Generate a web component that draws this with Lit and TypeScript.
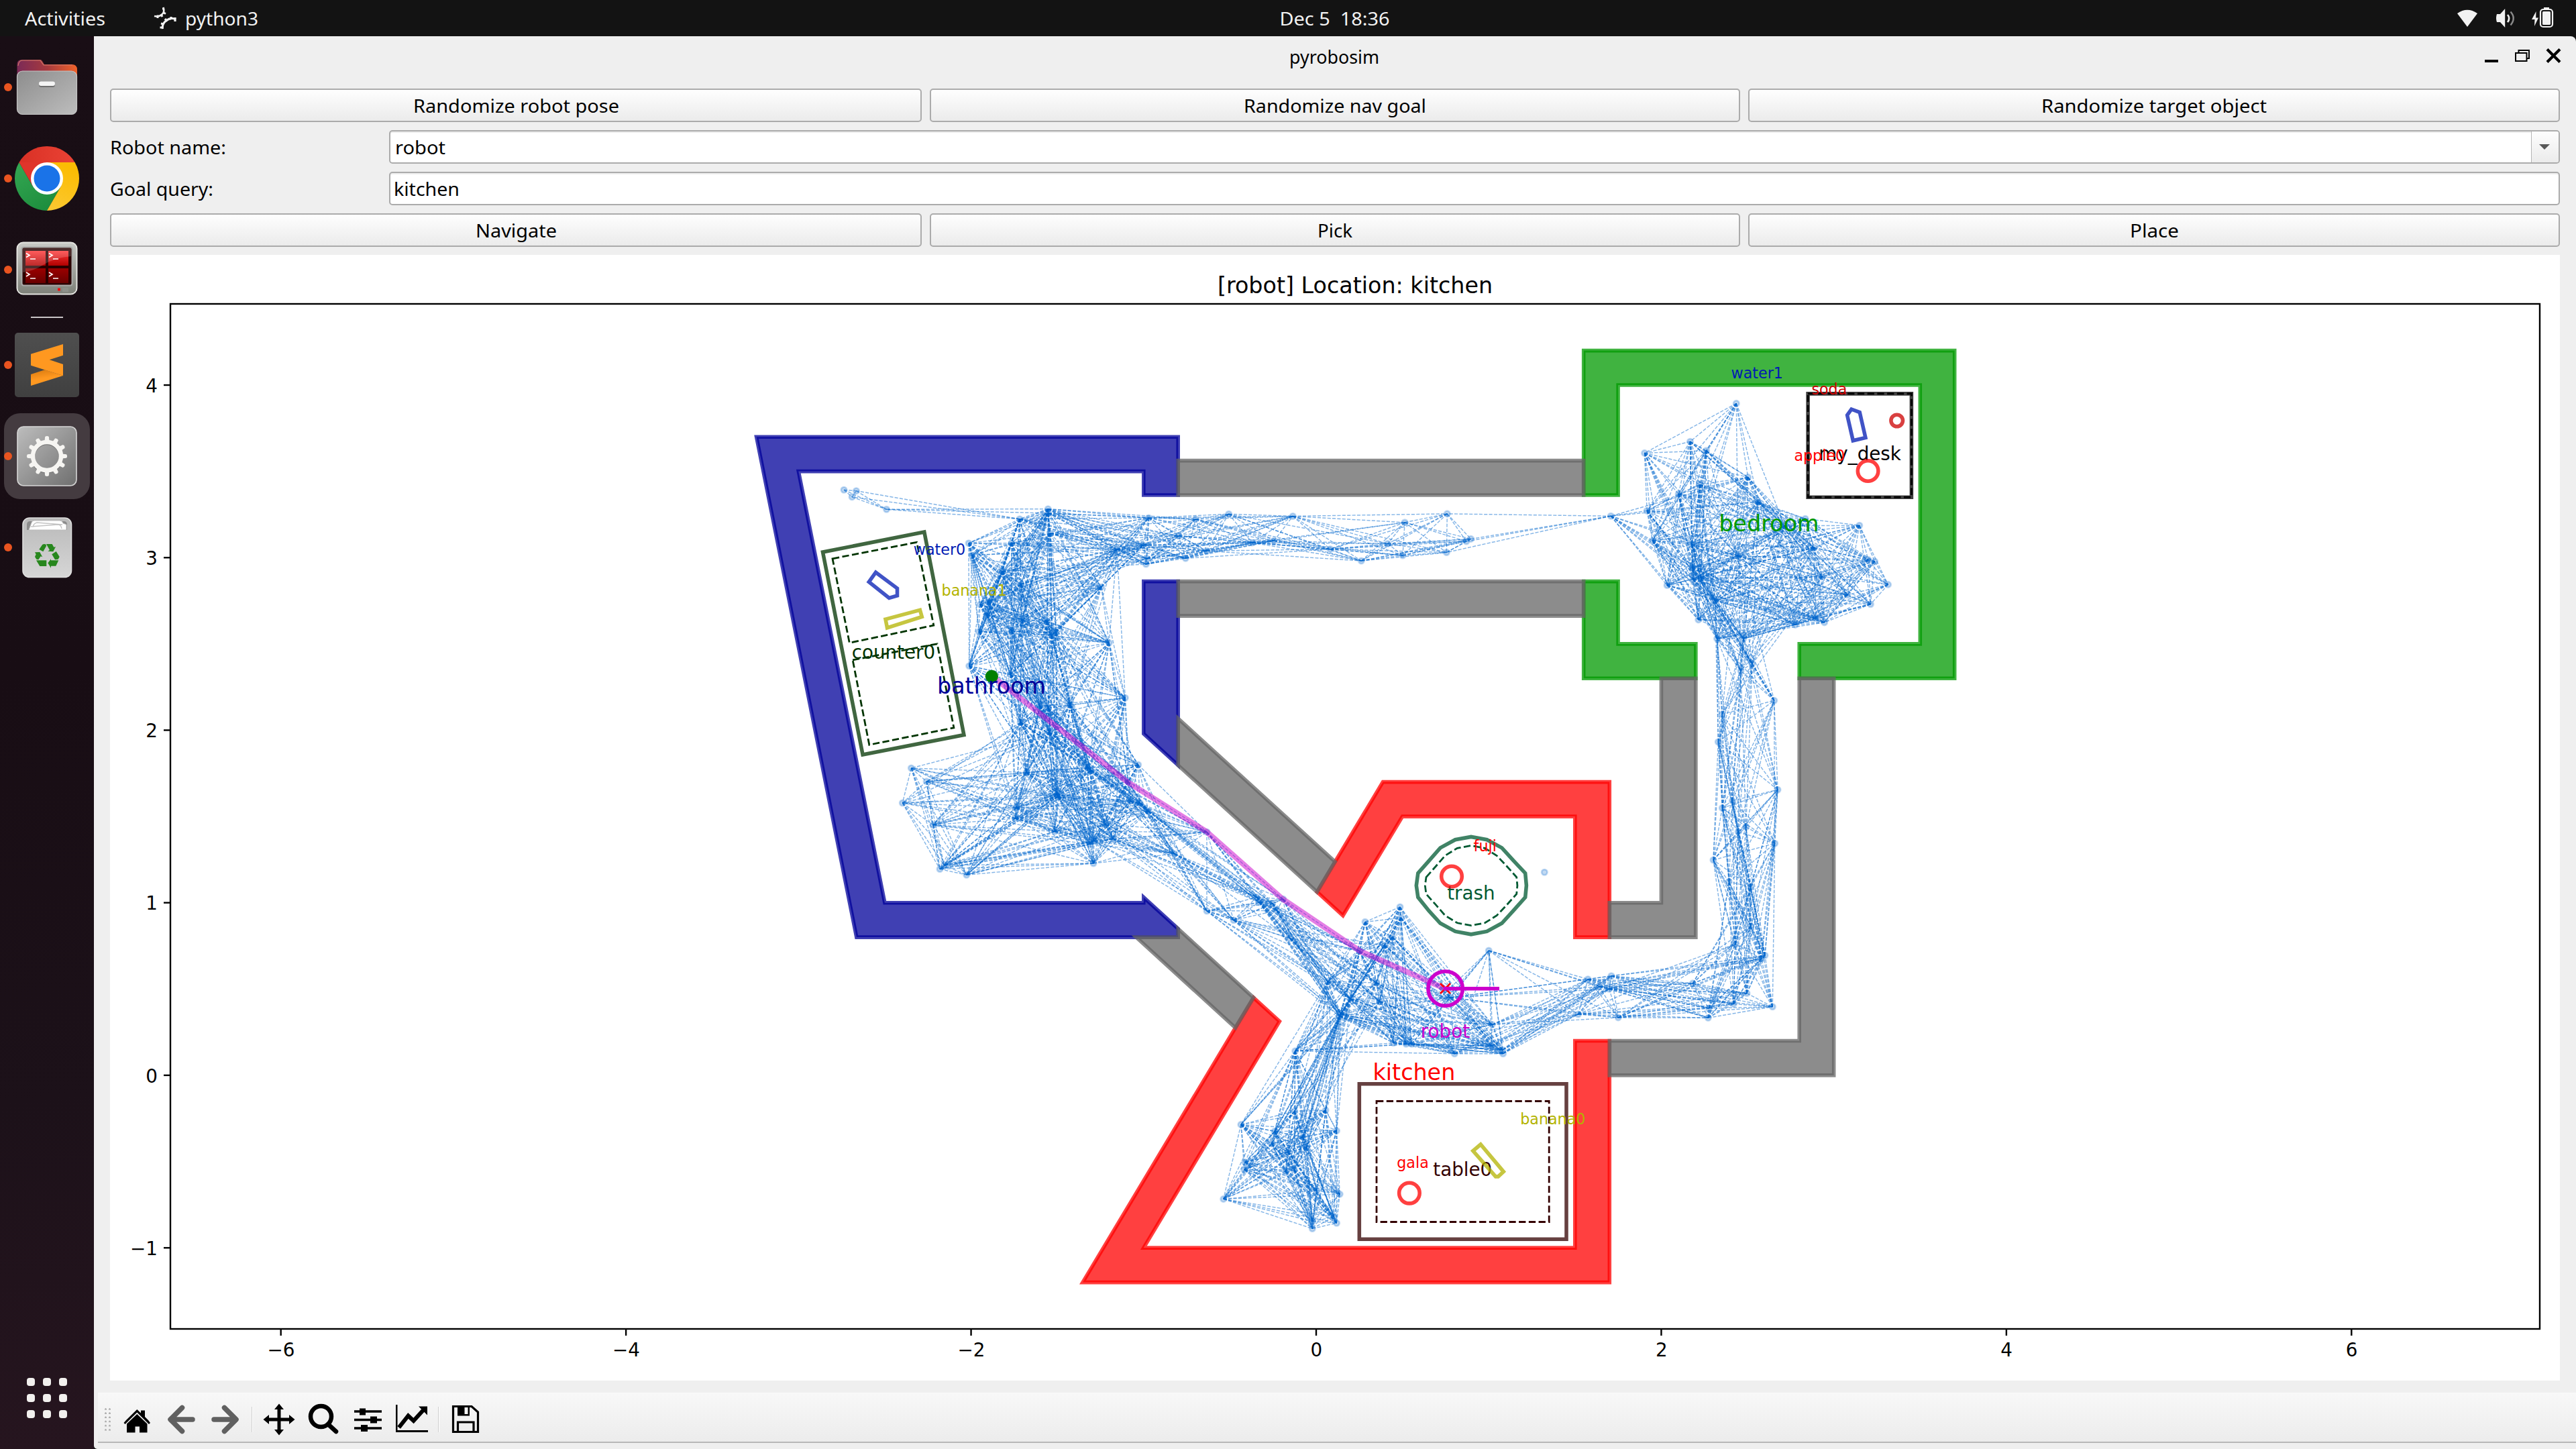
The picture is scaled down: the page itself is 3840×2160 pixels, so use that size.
import { LitElement, html, svg, css } from "lit";
import { customElement, property } from "lit/decorators.js";

type Pt = [number, number];

/* ---------- world geometry (metres) ---------- */
const PX = 257.22;
const OX = 1962;
const OY = 1602.9;
const sx = (x: number) => OX + x * PX;
const sy = (y: number) => OY - y * PX;
const poly = (pts: Pt[]) =>
  "M" + pts.map(([x, y]) => `${sx(x).toFixed(1)} ${sy(y).toFixed(1)}`).join("L") + "Z";
const polyPx = (pts: Pt[]) => "M" + pts.map((p) => p.join(" ")).join("L") + "Z";

const WALLS: { cls: string; pts: Pt[] }[] = [
  { cls: "kitchen", pts: [[0.0045, 1.0627], [0.3868, 1.7], [1.7, 1.7], [1.7, 0.8], [1.5, 0.8], [1.5, 1.5], [0.5, 1.5], [0.1551, 0.9253]] },
  { cls: "kitchen", pts: [[-0.363, 0.4503], [-1.3532, -1.2], [1.7, -1.2], [1.7, 0.2], [1.5, 0.2], [1.5, -1], [-1, -1], [-0.2123, 0.3127]] },
  { cls: "bedroom", pts: [[1.55, 3.3625], [1.55, 4.2], [3.7, 4.2], [3.7, 2.3], [2.8, 2.3], [2.8, 2.5], [3.5, 2.5], [3.5, 4], [1.75, 4], [1.75, 3.3625]] },
  { cls: "bedroom", pts: [[1.55, 2.8625], [1.75, 2.8625], [1.75, 2.5], [2.2, 2.5], [2.2, 2.3], [1.55, 2.3]] },
  { cls: "bathroom", pts: [[-0.8, 3.3625], [-0.8, 3.7], [-3.244, 3.7], [-2.664, 0.8], [-0.8, 0.8], [-0.8, 0.849], [-1, 1.0316], [-1, 1], [-2.5, 1], [-3, 3.5], [-1, 3.5], [-1, 3.3625]] },
  { cls: "bathroom", pts: [[-1, 2.8625], [-0.8, 2.8625], [-0.8, 1.797], [-1, 1.9794]] },
  { cls: "hall", pts: [[-0.8, 3.3625], [1.55, 3.3625], [1.55, 3.5625], [-0.8, 3.5625]] },
  { cls: "hall", pts: [[-0.8, 2.6625], [1.55, 2.6625], [1.55, 2.8625], [-0.8, 2.8625]] },
  { cls: "hall", pts: [[-0.8, 1.797], [-0.8, 2.0677], [0.1094, 1.2378], [0.0045, 1.0627]] },
  { cls: "hall", pts: [[-1.043, 0.8], [-0.8, 0.8], [-0.8, 0.849], [-0.363, 0.4503], [-0.468, 0.2753]] },
  { cls: "hall", pts: [[1.7, 1], [2, 1], [2, 2.3], [2.2, 2.3], [2.2, 0.8], [1.7, 0.8]] },
  { cls: "hall", pts: [[1.7, 0], [3, 0], [3, 2.3], [2.8, 2.3], [2.8, 0.2], [1.7, 0.2]] },
];

/* ---------- roadmap nodes (canvas pixels) ---------- */
const NODES: Pt[] = [
  [1562.3,758.7],[1562.7,765],[1520,773.7],[1565.7,795.3],[1444,809.7],[1508,809.7],[1448.7,827.7],[1494.3,852],
  [1521.7,871],[1472.7,897],[1461,901],[1471,916.7],[1523.3,924.3],[1560.7,926.7],[1508,940.3],[1459.3,941.7],
  [1574.3,943],[1568,947.3],[1641.7,875],[1653.3,958.3],[1444.7,992.7],[1506.3,1005.7],[1550,1052.3],[1562.7,1055.7],
  [1595.3,1050.7],[1677.3,1040.3],[1521,1076.7],[1564.3,1091.3],[1530,1151.5],[1621,1143.7],[1626,1149],[1696.7,1140],
  [1681.7,1165],[1575.2,1184.5],[1577,1188],[1514.7,1204.3],[1513.3,1220],[1685.7,1193.7],[1699.3,1197],[1712,1209.3],
  [1648.3,1229],[1665,819],[1704.3,812.7],[1712.3,772],[1710,832.7],[1708.3,841],[1767.3,832.3],[1757.3,799],
  [1782.3,774],[1798.7,821.3],[1831.7,766.3],[1866.7,809],[1899,806.3],[1572.3,1239.3],[1631,1253.3],[1625,1258.3],
  [1630,1287],[1659.3,1250.3],[1750.7,1272.7],[1799,1240.3],[1799,1358],[1839,1371.7],[1873.3,1337.3],[1876.7,1345],
  [1896.7,1346.7],[1903.3,1357.3],[1912.7,1340.3],[1923,1399],[2035,1374.3],[2087,1352],[2088.7,1368.3],[2075.7,1397],
  [2064,1409.3],[2026.7,1417.7],[2051.7,1465],[2056.7,1493],[1979.3,1463],[2013.3,1489.3],[1998.8,1511],[1996.8,1515],
  [1930.7,1566.7],[2077.3,1554.7],[2096,1556.3],[2104.3,1556.3],[2168.3,1570.7],[2224.3,1527.3],[2223.3,1559.3],
  [2240,1565],[2240.6,1570.7],[2219.3,1417],[2162,1487],[1849.9,1676.4],[1929.8,1656.5],[1976.1,1655],[1899.9,1686.5],
  [1992.5,1685.6],[1942,1694.8],[1895.7,1705],[1947.5,1710.8],[1919.7,1717.1],[1855.8,1732.6],[1854.9,1743.7],
  [1916.4,1746.6],[1929.4,1743.7],[1823.8,1787.4],[1962.7,1774.8],[1997.2,1780.1],[1956.8,1820.8],[1956.3,1831.5],
  [1988.3,1814],[1992.5,1823.2],[2352.5,1512],[2367.1,1459.7],[2384,1470.8],[2398.7,1474.2],[2402,1454.8],[2412.2,1516.9],
  [2523.3,1465.9],[2546.3,1517.3],[2547.3,1503],[2584.3,1496.6],[2604,1480.6],[2642.3,1500.8],[2631,1424.2],
  [2625.7,1429.3],[2586.7,1407.4],[2610,1380.9],[2610,1322],[2577.3,1314.4],[2554,1282],[2645.7,1257.2],[2602.7,1232.7],
  [2591,1239.9],[2567.3,1204.5],[2582.3,1193.6],[2650,1177.2],[2561.3,1106],[2567,1064.8],[2644.7,1044.2],
  [2588.3,601.4],[2519.5,658.2],[2451.5,675.4],[2543.6,671.8],[2605.7,711.4],[2533.8,722.5],[2502.1,736.4],
  [2621.1,748.2],[2455.1,761.4],[2401.3,769.3],[2691.1,773.2],[2771.8,783.2],[2660.3,783.9],[2463.4,806.1],
  [2521.5,811.4],[2704.2,816.4],[2591.1,828.6],[2784.8,834.3],[2794.7,837.1],[2522.7,846.4],[2716.4,859.6],
  [2523.9,863.2],[2535.7,861.4],[2485.1,872.5],[2814.5,871.4],[2754,886.8],[2556.7,895.4],[2788.4,900.7],
  [2706.9,921.4],[2719.6,927.9],[2676.1,931.4],[2531.8,923.9],[2559.5,952.1],[2599,952.1],[2612,989.3],[2595,1000],
  [1927.2,769.5],[2094.1,778.8],[2157.3,765.9],[2068.6,810.5],[1982.9,818.6],[2029.3,836],[2091,828],[2156.3,823.5],
  [2192.6,803.4],[2185.9,807],[1258,730.2],[1276.4,731.7],[1270.1,740.9],[1321.5,759.3],[1358.4,1145],[1381.1,1164.9],
  [1345.3,1197],[1390.8,1229.7],[1401,1295.5],[1407.3,1289.9],[1440.8,1304.2],[2302.3,1300.2],
];

/* Collision test against rooms and hallways shrunk by the robot radius. */
const E = 0.012;
function free(x: number, y: number): boolean {
  const dx = x + 1.881, dy = y - 2.3095;
  const along = 0.7386 * dx - 0.6741 * dy;
  const across = Math.abs(0.6741 * dx + 0.7386 * dy);
  const inside =
    (y > -0.9 - E && x < 1.4 + E && y < 1.4 + E && x > -0.2834 + 0.6 * y - E) ||
    (x > 1.85 - E && x < 3.4 + E && y > 2.6 - E && y < 3.9 + E) ||
    (x < -1.1 + E && y > 1.1 - E && y < 3.4 + E && x > -2.198 - 0.2 * y - E) ||
    (across < 0.25 + E && along > 0 && along < 3.32) ||
    (x > -1.9 && x < 2.6 && Math.abs(y - 3.1125) < 0.15 + E) ||
    (x > 0.9 && x < 2.7 + E && y > 0.3 - E && y < 0.7 + E) ||
    (x > 2.3 - E && x < 2.7 + E && y > 0.3 && y < 3.1);
  if (!inside) return false;
  const M = 0.1 - E;
  if (x > 2.85 - M && x < 3.45 + M && y > 3.35 - M && y < 3.95 + M) return false;
  if (x > 0.25 - M && x < 1.45 + M && y > -0.95 - M && y < -0.05 + M) return false;
  if (Math.hypot(x - 0.9, y - 1.1) < 0.31 + M) return false;
  const cx = x + 2.45, cy = y - 2.5;
  const ux = Math.abs(cx * 0.981 + cy * 0.194), uy = Math.abs(-cx * 0.194 + cy * 0.981);
  return !(ux < 0.3 + M && uy < 0.6 + M);
}
function visible(a: Pt, b: Pt): boolean {
  const d = Math.hypot(a[0] - b[0], a[1] - b[1]);
  const n = Math.ceil(d / 4);
  for (let i = 1; i < n; i++) {
    const t = i / n;
    const px = a[0] + (b[0] - a[0]) * t, py = a[1] + (b[1] - a[1]) * t;
    if (!free((px - OX) / PX, (OY - py) / PX)) return false;
  }
  return true;
}
const EDGES: [Pt, Pt][] = [];
for (let i = 0; i < NODES.length; i++)
  for (let j = i + 1; j < NODES.length; j++) {
    const a = NODES[i], b = NODES[j];
    if (Math.hypot(a[0] - b[0], a[1] - b[1]) <= PX && visible(a, b)) EDGES.push([a, b]);
  }

const ROUND_OUT: Pt[] = [[793,251],[832,213],[872,173],[925,148],[981,139],[1037,148],[1090,173],[1130,211],[1173,251],[1177,289],[1173,325],[1130,367],[1090,405],[1037,430],[981,439],[925,430],[872,405],[832,367],[793,325],[787,289]];
const ROUND_IN: Pt[] = [[822,263],[857,229],[889,197],[932,174],[981,166],[1030,174],[1072,197],[1107,229],[1142,263],[1145,289],[1142,315],[1107,349],[1072,381],[1030,404],[981,412],[932,404],[889,381],[857,349],[822,315],[818,289]];
const fromDetail = (p: Pt[]): Pt[] => p.map(([x, y]) => [+(x / 2.3758 + 1780).toFixed(1), +(y / 2.0632 + 1180).toFixed(1)] as Pt);

const FURNITURE: { color: string; solid: string; dashed: string[] }[] = [
  { color: "#330000", solid: poly([[0.25, -0.05], [1.45, -0.05], [1.45, -0.95], [0.25, -0.95]]), dashed: [poly([[0.35, -0.15], [1.35, -0.15], [1.35, -0.85], [0.35, -0.85]])] },
  { color: "#000000", solid: poly([[2.85, 3.95], [3.45, 3.95], [3.45, 3.35], [2.85, 3.35]]), dashed: [poly([[2.85, 3.95], [3.45, 3.95], [3.45, 3.35], [2.85, 3.35]])] },
  { color: "#003300", solid: polyPx([[1226.5, 823], [1377.8, 793], [1436.9, 1095.5], [1286.1, 1125.1]]), dashed: [polyPx([[1241, 832.8], [1366.6, 808.3], [1391.8, 932.2], [1266.3, 958.3]]), polyPx([[1271.1, 983.8], [1397.1, 959.8], [1421.9, 1084.8], [1295.8, 1110.3]])] },
  { color: "#005a33", solid: polyPx(fromDetail(ROUND_OUT)), dashed: [polyPx(fromDetail(ROUND_IN))] },
];
const FURNITURE_LABELS: [string, number, number, string][] = [
  ["table0", 2180.3, 1753.4, "#330000"],
  ["my_desk", 2772.6, 686, "#000000"],
  ["counter0", 1331.9, 981.6, "#003300"],
  ["trash", 2192.9, 1341.2, "#005a33"],
];
const OBJECT_LABELS: [string, number, number, string][] = [
  ["apple0", 2712.3, 686.6, "#ff0000"],
  ["soda", 2726.9, 588, "#cc0000"],
  ["water1", 2619.2, 563.6, "#001ab3"],
  ["water0", 1400.5, 827.2, "#001ab3"],
  ["banana1", 1452.2, 888.4, "#b3b300"],
  ["fuji", 2213.7, 1269.3, "#ff0000"],
  ["banana0", 2314.8, 1676.2, "#b3b300"],
  ["gala", 2106, 1740.6, "#ff0000"],
];
const OBJECTS: [string, string][] = [
  ["#001ab3", polyPx([[2759.9, 610], [2772.2, 614.6], [2780.9, 652.5], [2762.3, 656.8], [2753.6, 618.9]])],
  ["#001ab3", polyPx([[1305.5, 853.2], [1337.5, 877.1], [1337.5, 887.9], [1325.4, 891.4], [1295.3, 867.4]])],
  ["#b3b300", polyPx([[1320, 923.1], [1371.4, 909.3], [1374.3, 919.5], [1322.5, 935.8]])],
  ["#b3b300", polyPx([[2207.2, 1706], [2195.8, 1715.6], [2229.5, 1753.9], [2233.3, 1753.9], [2241.3, 1746.6]])],
];
const FRUIT: [number, number, number, string][] = [
  [2164, 1306.5, 15.3, "#ff0000"],
  [2100.9, 1778.6, 15.3, "#ff0000"],
  [2784.6, 702, 15.3, "#ff0000"],
  [2827.7, 627, 8.8, "#cc0000"],
];

@customElement("world-plot")
class WorldPlot extends LitElement {
  static styles = css`
    :host { display: block; background: #fff; }
    svg { display: block; width: 100%; height: 100%; }
    text { font-family: "DejaVu Sans", sans-serif; }
    .frame { fill: none; stroke: #000; stroke-width: 2.4; }
    .tick { stroke: #000; stroke-width: 2.4; }
    .num, .place { font-size: 27.78px; }
    .title, .room { font-size: 33.33px; }
    .obj { font-size: 22.22px; }
    .mid { text-anchor: middle; }
    .end { text-anchor: end; }
    .wall { stroke-width: 5.56; fill-opacity: 0.75; stroke-opacity: 0.75; }
    .kitchen { fill: #f00; stroke: #f00; }
    .bedroom { fill: #090; stroke: #090; }
    .bathroom { fill: #009; stroke: #009; }
    .hall { fill: #666; stroke: #666; }
    .solid { fill: none; stroke-width: 5.56; stroke-opacity: 0.75; }
    .dashed { fill: none; stroke-width: 2.78; stroke-dasharray: 10.3 4.45; }
    .edge { stroke: #0066cc; stroke-width: 1.45; stroke-opacity: 0.48; stroke-dasharray: 5.14 2.22; }
    .node { fill: #0066cc; stroke: #0066cc; fill-opacity: 0.24; stroke-opacity: 0.24; stroke-width: 2.78; }
    .path { fill: none; stroke: #cc00cc; stroke-opacity: 0.5; stroke-width: 8.3; stroke-linejoin: round; }
    .bot { fill: none; stroke: #cc00cc; stroke-width: 5.56; }
    .cross { fill: none; stroke: #f00; stroke-width: 2.78; }
  `;
  render() {
    return html`<svg viewBox="164 380 3652 1678">
      ${WALLS.map((w) => svg`<path class="wall ${w.cls}" d=${poly(w.pts)} />`)}
      ${FURNITURE.map((f) => svg`
        <path class="solid" stroke=${f.color} d=${f.solid} />
        ${f.dashed.map((d) => svg`<path class="dashed" stroke=${f.color} d=${d} />`)}`)}
      ${FURNITURE_LABELS.map(([t, x, y, c]) => svg`<text class="place mid" x=${x} y=${y} fill=${c}>${t}</text>`)}
      ${OBJECTS.map(([c, d]) => svg`<path class="solid" stroke=${c} d=${d} />`)}
      ${FRUIT.map(([x, y, r, c]) => svg`<circle class="solid" cx=${x} cy=${y} r=${r} stroke=${c} />`)}
      ${EDGES.map(([a, b]) => svg`<line class="edge" x1=${a[0]} y1=${a[1]} x2=${b[0]} y2=${b[1]} />`)}
      ${NODES.map(([x, y]) => svg`<circle class="node" cx=${x} cy=${y} r="4.17" />`)}
      ${OBJECT_LABELS.map(([t, x, y, c]) => svg`<text class="obj mid" x=${x} y=${y} fill=${c}>${t}</text>`)}
      <path class="path" d="M2154.2 1473.7L2027 1417.5L1911.8 1340L1799 1240L1680.5 1165.5L1478.6 1007.8" />
      <path class="cross" d="M2147 1466L2162 1481M2162 1466L2147 1481" />
      <circle class="bot" cx="2154.6" cy="1473.7" r="25.7" />
      <path class="bot" d="M2151.5 1473.7H2235" />
      <circle cx="1478.3" cy="1008.3" r="9.6" fill="#008000" />
      <text class="room mid" x="2107.9" y="1610" fill="#ff0000">kitchen</text>
      <text class="room mid" x="1478" y="1033.8" fill="#000099">bathroom</text>
      <text class="room mid" x="2637" y="792" fill="#009900">bedroom</text>
      <text class="place mid" x="2154.4" y="1547.3" fill="#cc00cc">robot</text>
      <rect class="frame" x="254" y="453" width="3532" height="1528" />
      ${[-6, -4, -2, 0, 2, 4, 6].map((v) => svg`
        <path class="tick" d="M${sx(v)} 1981v10" />
        <text class="num mid" x=${sx(v) + 0.3} y="2021.5">${String(v).replace("-", "−")}</text>`)}
      ${[-1, 0, 1, 2, 3, 4].map((v) => svg`
        <path class="tick" d="M244 ${sy(v)}h10" />
        <text class="num end" x="235" y=${sy(v) + 10.8}>${String(v).replace("-", "−")}</text>`)}
      <text class="title mid" x="2020" y="437">[robot] Location: kitchen</text>
    </svg>`;
  }
}

/* Interface label fitted to a fixed advance width. */
@customElement("ui-label")
class UiLabel extends LitElement {
  @property() text = "";
  @property({ type: Number }) width = 100;
  static styles = css`
    :host { display: block; flex: none; }
    svg { display: block; overflow: visible; }
    text { font: 27.5px "Noto Sans", "Open Sans", sans-serif; fill: currentColor; white-space: pre; }
  `;
  render() {
    return html`<svg width=${this.width} height="36">
      <text x="0" y="29" textLength=${this.width} lengthAdjust="spacingAndGlyphs">${this.text}</text>
    </svg>`;
  }
}
const label = (text: string, width: number) => html`<ui-label .text=${text} .width=${width}></ui-label>`;

const gear = () => {
  const teeth = [];
  for (let i = 0; i < 12; i++)
    teeth.push(svg`<path d="M60.4 42L61.2 35Q64 32.8 66.8 35L67.6 42Z" fill="#f6f5f2" transform="rotate(${i * 30} 64 64)" />`);
  return teeth;
};

@customElement("app-dock")
class AppDock extends LitElement {
  static styles = css`
    :host { display: flex; flex-direction: column; align-items: center; gap: 8px; width: 140px; padding: 12px 0 46px; box-sizing: border-box;
      background: linear-gradient(175deg, #190e15 0%, #180d14 45%, #1c1119 75%, #26151f 100%); }
    .tile { position: relative; width: 128px; height: 128px; border-radius: 24px; flex: none; }
    .active { background: #443b40; }
    .tile::before { content: ""; position: absolute; left: 0; top: 58px; width: 12px; height: 12px; border-radius: 50%; background: #e95420; z-index: 1; }
    svg { display: block; width: 128px; height: 128px; }
    .rule { width: 48px; height: 2px; background: #c8c4c6; margin: -2px 0; flex: none; }
    .apps { margin-top: auto; display: grid; grid-template-columns: repeat(3, 12px); gap: 12px; }
    .apps i { width: 12px; height: 12px; border-radius: 4px; background: #f2f0ee; }
  `;
  render() {
    return html`
      <div class="tile"><svg viewBox="0 0 128 128">
        <defs>
          <linearGradient id="fo"><stop offset="0" stop-color="#7b2a57" /><stop offset=".5" stop-color="#a63a3e" /><stop offset="1" stop-color="#f0622b" /></linearGradient>
          <linearGradient id="fg" x2="1" y2="1"><stop offset="0" stop-color="#8d8d8d" /><stop offset="1" stop-color="#bdbdbd" /></linearGradient>
        </defs>
        <path d="M19.500 60V30q0-7 7-7H54q2 0 3 2l3 5h41q8 0 8 8v22z" fill="url(#fo)" />
        <path d="M21 32q1-8 6-8H54l5 7H102" fill="none" stroke="#d37a68" stroke-width="1.200" />
        <rect x="19.500" y="40" width="89" height="64.500" rx="8" fill="url(#fg)" stroke="#c6c6c6" stroke-width="1.200" />
        <rect x="52" y="57" width="24" height="7" rx="3.500" fill="#6f6f6f" />
        <rect x="52" y="55.500" width="24" height="6.500" rx="3.200" fill="#f4f4f4" />
      </svg></div>
      <div class="tile"><svg viewBox="0 0 128 128">
        <defs>
          <linearGradient id="cr"><stop offset="0" stop-color="#d93025" /><stop offset="1" stop-color="#ea4335" /></linearGradient>
          <linearGradient id="cy" x1="0" y1="1" x2=".3" y2="0"><stop offset="0" stop-color="#fcc934" /><stop offset="1" stop-color="#fbbc04" /></linearGradient>
          <linearGradient id="cg" x1=".6" y1="1" x2="0" y2="0"><stop offset="0" stop-color="#1e8e3e" /><stop offset="1" stop-color="#34a853" /></linearGradient>
        </defs>
        <path d="M64 64L22.430 40A48 48 0 0 1 105.570 40Z" fill="url(#cr)" />
        <path d="M22.430 40A48 48 0 0 0 64 112L84.800 76L64 64L43.200 76Z" fill="url(#cg)" />
        <path d="M105.570 40A48 48 0 0 1 64 112L84.800 76L64 40Z" fill="url(#cy)" />
        <path d="M22.430 40L43.200 76L64 64V40Z" fill="#df352b" />
        <circle cx="64" cy="64" r="24" fill="#fff" /><circle cx="64" cy="64" r="19.500" fill="#1a73e8" />
      </svg></div>
      <div class="tile"><svg viewBox="0 0 128 128">
        <defs>
          <linearGradient id="tr" x2="0" y2="1"><stop offset="0" stop-color="#ff3b3b" /><stop offset="1" stop-color="#b00000" /></linearGradient>
          <linearGradient id="td" x2="0" y2="1"><stop offset="0" stop-color="#9a0000" /><stop offset="1" stop-color="#6a0000" /></linearGradient>
          <linearGradient id="tf" x2="0" y2="1"><stop offset="0" stop-color="#c9cac6" /><stop offset="1" stop-color="#7d8078" /></linearGradient>
        </defs>
        <rect x="19.500" y="23.500" width="89" height="77" rx="9" fill="url(#tf)" stroke="#e4e4e0" stroke-width="2" />
        <rect x="26.500" y="30.500" width="75" height="57" rx="3" fill="#2a0000" stroke="#a9aaa8" stroke-width="2" />
        <path d="M32 36h30v22H32zM66 36h30v22H66z" fill="url(#tr)" />
        <path d="M32 62h30v22H32zM66 62h30v22H66z" fill="url(#td)" />
        <path d="M28 32h72v12Q76 46 60 56T28 68z" fill="#fff" opacity=".17" />
        <path d="M33 39.500l5 3-5 3M39 48h8M67 39.500l5 3-5 3M73 48h8M33 68l5 3-5 3M39 77h8M67 68l5 3-5 3M73 77h8" fill="none" stroke="#fff" stroke-width="1.700" />
        <rect x="80" y="91.500" width="4" height="4" fill="#f01010" /><rect x="87" y="91" width="9" height="6" fill="#8d908a" />
      </svg></div>
      <div class="rule"></div>
      <div class="tile"><svg viewBox="0 0 128 128">
        <defs><linearGradient id="sb" x2="0" y2="1"><stop offset="0" stop-color="#4f4f4f" /><stop offset="1" stop-color="#404040" /></linearGradient>
          <linearGradient id="ss" x1="0" y1="0" x2=".3" y2="1"><stop offset="0" stop-color="#d8790f" /><stop offset=".6" stop-color="#ff9820" /></linearGradient></defs>
        <rect x="16" y="16" width="96" height="96" rx="5" fill="url(#sb)" />
        <path d="M40 78L60.700 71.300L88 80L40 95z" fill="url(#ss)" />
        <path d="M40 47.700L88 33V49.700L67.700 56.300L88 63V80L40 64.700z" fill="#ff9820" />
      </svg></div>
      <div class="tile active"><svg viewBox="0 0 128 128">
        <defs><linearGradient id="sg" x2="1" y2="1"><stop offset="0" stop-color="#bdbdbd" /><stop offset="1" stop-color="#6f6f6f" /></linearGradient></defs>
        <rect x="20" y="20" width="88" height="88" rx="9" fill="url(#sg)" stroke="#d6d6d6" stroke-width="1.600" />
        <circle cx="64" cy="65" r="21" fill="none" stroke="#6d6d6d" stroke-width="6.500" />
        ${gear()}
        <circle cx="64" cy="64" r="21" fill="none" stroke="#f6f5f2" stroke-width="6.500" />
      </svg></div>
      <div class="tile"><svg viewBox="0 0 128 128">
        <defs><linearGradient id="tb" x2="0" y2="1"><stop offset="0" stop-color="#b9b9b9" /><stop offset="1" stop-color="#d6d6d6" /></linearGradient></defs>
        <rect x="28" y="20" width="72.500" height="88.500" rx="10" fill="url(#tb)" stroke="#dedede" stroke-width="1.600" />
        <path d="M34 38v-8q0-5 5-5h50q5 0 5 5v8z" fill="#8b8b8b" />
        <path d="M37 38l4-11q1-3 4-3h38q4 0 5 4l5 2v8z" fill="#fff" stroke="#bbb" stroke-width="1" />
        <path d="M43 34q1-6 6-7l38 3M40 33l40-3q5 0 6 6" fill="none" stroke="#c4c4c4" stroke-width="1.400" />
        <path fill="#27871d" d="M52.300 67L57.300 59.700Q60 58.500 62.700 59.700L63 62L58.300 70.300ZM63 59H71.700L74.300 63.700L77 63L73.300 70.300L65.300 69.700L68 68ZM71.300 74.300L77.700 70L82.700 78L80.700 81.700L76 82.300ZM65.300 87.300L70 81.300V83.300H81.300L77.300 91.700H70V94.700ZM48 83.300H63.300V92H53.300ZM46 71.300L53.300 71L57.300 78.300L54.700 77.300L51.300 82.300L48.300 81.700L46 78L47.700 74.300Z" />
      </svg></div>
      <div class="apps">${Array.from({ length: 9 }, () => html`<i></i>`)}</div>`;
  }
}

const ICONS = {
  home: svg`<path d="M8 25L24.300 9L30 14.500V10.500H36V20L41 25L44 29L42 31L24.300 13.500L6.500 31L4.500 29Z" fill="#000" /><path d="M9 30.500L24.300 16L39.500 30.500V43.500H28V34.500H21.500V43.500H9Z" fill="#000" />`,
  back: svg`<path d="M25.500 6.500L8 24L25.500 41.500M9 24H41" fill="none" stroke="#606060" stroke-width="7.500" stroke-linejoin="round" stroke-linecap="round" />`,
  next: svg`<path d="M22.500 6.500L40 24L22.500 41.500M39 24H7" fill="none" stroke="#606060" stroke-width="7.500" stroke-linejoin="round" stroke-linecap="round" />`,
  move: svg`<path d="M24 5V43M5 24H43" stroke="#000" stroke-width="5" /><path d="M24 .5L31 9H17zM24 47.500L31 39H17zM.500 24L9 17V31zM47.500 24L39 17V31z" fill="#000" />`,
  find: svg`<circle cx="20.500" cy="19.500" r="15.500" fill="none" stroke="#000" stroke-width="6.500" /><path d="M31 31L43 42" stroke="#000" stroke-width="6.500" stroke-linecap="round" />`,
  tune: svg`<path d="M4 12H45M4 24.500H45M4 37H45" stroke="#000" stroke-width="3.600" /><path d="M12 7.500h9v10h-9zM28 19.500h10v10h-10zM14 32h10v10h-10z" fill="#000" />`,
  plot: svg`<path d="M1 2V41.500M0 41.500H48" stroke="#000" stroke-width="3" fill="none" /><path d="M6.500 33.500L18.500 18.500L26.500 26L41 10" fill="none" stroke="#000" stroke-width="6" stroke-linecap="square" /><path d="M34 4.500H47V17.500z" fill="#000" />`,
  save: svg`<path d="M5.500 4.500H33L42.500 13V42.500H5.500Z" fill="none" stroke="#000" stroke-width="3.200" /><path d="M12 4H30V18.500H12z" fill="#000" /><path d="M22.500 6h5v10h-5z" fill="#f4f4f4" /><path d="M12.500 42V28H36V42" fill="none" stroke="#000" stroke-width="3.200" />`,
};

@customElement("app-root")
class AppRoot extends LitElement {
  static styles = css`
    :host { display: flex; flex-direction: column; width: 3840px; height: 2160px; overflow: hidden; background: #131313; }
    .top { height: 54px; flex: none; background: #131313; color: #f2f2f2; display: grid; grid-template-columns: 1fr auto 1fr; align-items: center; }
    .left { display: flex; align-items: center; padding-left: 37px; }
    .app { display: flex; align-items: center; gap: 13px; margin-left: 72px; }
    .clock { transform: translateX(69.500px); }
    .status { display: flex; justify-content: flex-end; padding-right: 32px; }
    .status svg, .app svg { display: block; }
    .main { flex: 1; display: flex; min-height: 0; }
    .win { flex: 1; display: flex; flex-direction: column; background: #efefef; border-radius: 0 8px 0 5px; min-width: 0; }
    .bar { height: 78px; box-sizing: border-box; padding: 1px 20px 19px 0; display: grid; grid-template-columns: 1fr auto 1fr; align-items: center; flex: none; color: #000; }
    .name { transform: translateX(9px); }
    .ctl { display: flex; justify-content: flex-end; margin-top: -3px; }
    .body { display: flex; flex-direction: column; gap: 12px; padding: 0 24px; flex: 1; min-height: 0; }
    .row { display: grid; grid-template-columns: 1210px 1208px 1210px; gap: 12px; height: 50px; }
    .btn { box-sizing: border-box; border: 2px solid #ababab; border-radius: 5px; background: linear-gradient(#fefefe, #ebebeb); display: flex; align-items: center; justify-content: center; }
    .field { display: flex; align-items: center; height: 50px; }
    .cap { width: 416px; }
    .input { flex: 1; box-sizing: border-box; height: 50px; border: 2px solid #ababab; border-radius: 5px; background: #fff; box-shadow: inset 0 2px #ededed; display: flex; align-items: center; justify-content: space-between; padding-left: 5px; overflow: hidden; }
    .combo { padding-left: 7px; }
    .drop { width: 40px; height: 46px; border-left: 1px solid #b5b5b5; background: linear-gradient(#fdfdfd, #ebebeb); display: flex; align-items: center; justify-content: center; }
    .arrow { width: 0; border: 8px solid transparent; border-top-color: #585858; border-bottom: 0; margin-right: 3px; }
    world-plot { height: 1678px; flex: none; }
    .tools { margin: 18px 0 0 6px; height: 75px; box-sizing: border-box; flex: none; border-top: 1px solid #fafafa; border-bottom: 2px solid #b8b8b8; background: linear-gradient(#f8f8f8, #ececec); display: flex; align-items: center; padding: 5px 0 0 10px; }
    .grip { height: 34px; background: radial-gradient(circle at 1.500px 1.500px, #b0b0b0 1.300px, transparent 1.500px) 0 0 / 6px 6.200px repeat; width: 9px; margin-right: 6px; }
    .tool { width: 66px; display: flex; justify-content: center; }
    .sep { width: 14px; height: 38px; display: flex; justify-content: center; }
    .sep::before { content: ""; width: 1px; background: #cfcfcf; border-right: 1px solid #fff; }
    .foot { height: 9px; flex: none; }
  `;
  tool(k: keyof typeof ICONS) {
    return html`<div class="tool"><svg width="48" height="48" viewBox="0 0 48 48">${ICONS[k]}</svg></div>`;
  }
  render() {
    return html`
      <div class="top">
        <div class="left">
          ${label("Activities", 120)}
          <div class="app">
            <svg width="34" height="34" viewBox="0 0 34 34" fill="none" stroke="#f2f2f2">
              <path d="M14.500 1Q17 8 12 12Q8 15.500 1 14" stroke-width="2.600" />
              <path d="M13 3h3M15 9l3 1.500M11 11l2 4M6 12.500V17" stroke-width="3" />
              <path d="M33 18.500Q25 16 19 20.500Q12 26 13.500 33" stroke-width="3" />
              <path d="M32 16v6M26 19v-4M20 22l-3-4M15 26l-4-1M9.500 31h5" stroke-width="3.200" />
            </svg>
            ${label("python3", 109)}
          </div>
        </div>
        <div class="clock">${label("Dec 5  18:36", 164)}</div>
        <div class="status">
          <svg width="148" height="54" viewBox="3660 0 148 54">
            <path d="M3663 20Q3678 9.500 3693 20L3678 40Z" fill="#f2f2f2" />
            <path d="M3722 21h5l7.200-8V41L3727 33h-5q-2-6 0-12z" fill="#f2f2f2" />
            <path d="M3738 22q4.500 5 0 11" fill="none" stroke="#f2f2f2" stroke-width="2.600" />
            <path d="M3742.500 17.500q8.500 9.500 0 20" fill="none" stroke="#8a8a8a" stroke-width="2.400" />
            <path d="M3780.500 17l-6.500 12h4.500l-.5 10 6-12.500h-3.800z" fill="#f2f2f2" />
            <path d="M3792 11h8v3h-8z" fill="#f2f2f2" />
            <rect x="3787" y="14" width="18" height="26" rx="4" fill="none" stroke="#f2f2f2" stroke-width="2.200" />
            <rect x="3790" y="17" width="12" height="20" rx="1.500" fill="#f2f2f2" />
          </svg>
        </div>
      </div>
      <div class="main">
        <app-dock></app-dock>
        <div class="win">
          <div class="bar">
            <div></div>
            <div class="name">${label("pyrobosim", 134)}</div>
            <div class="ctl">
              <svg width="120" height="28" viewBox="3700 70 120 28" fill="none" stroke="#000">
                <path d="M3704 92h20" stroke-width="4" />
                <path d="M3750 80h16.500v12H3750zM3754.500 80v-4h15.500v12h-3.500" stroke-width="2" />
                <path d="M3797 74.500l19 19M3816 74.500l-19 19" stroke-width="4.200" />
              </svg>
            </div>
          </div>
          <div class="body">
            <div class="row">
              <div class="btn">${label("Randomize robot pose", 307)}</div>
              <div class="btn">${label("Randomize nav goal", 272)}</div>
              <div class="btn">${label("Randomize target object", 336)}</div>
            </div>
            <div class="field"><div class="cap">${label("Robot name:", 173)}</div>
              <div class="input combo">${label("robot", 75)}<div class="drop"><div class="arrow"></div></div></div></div>
            <div class="field"><div class="cap">${label("Goal query:", 154)}</div>
              <div class="input">${label("kitchen", 98)}</div></div>
            <div class="row">
              <div class="btn">${label("Navigate", 121)}</div>
              <div class="btn">${label("Pick", 52)}</div>
              <div class="btn">${label("Place", 73)}</div>
            </div>
            <world-plot></world-plot>
          </div>
          <div class="tools">
            <div class="grip"></div>
            ${this.tool("home")}${this.tool("back")}${this.tool("next")}
            <div class="sep"></div>
            ${this.tool("move")}${this.tool("find")}${this.tool("tune")}${this.tool("plot")}
            <div class="sep"></div>
            ${this.tool("save")}
          </div>
          <div class="foot"></div>
        </div>
      </div>`;
  }
}
void [WorldPlot, UiLabel, AppDock, AppRoot];
